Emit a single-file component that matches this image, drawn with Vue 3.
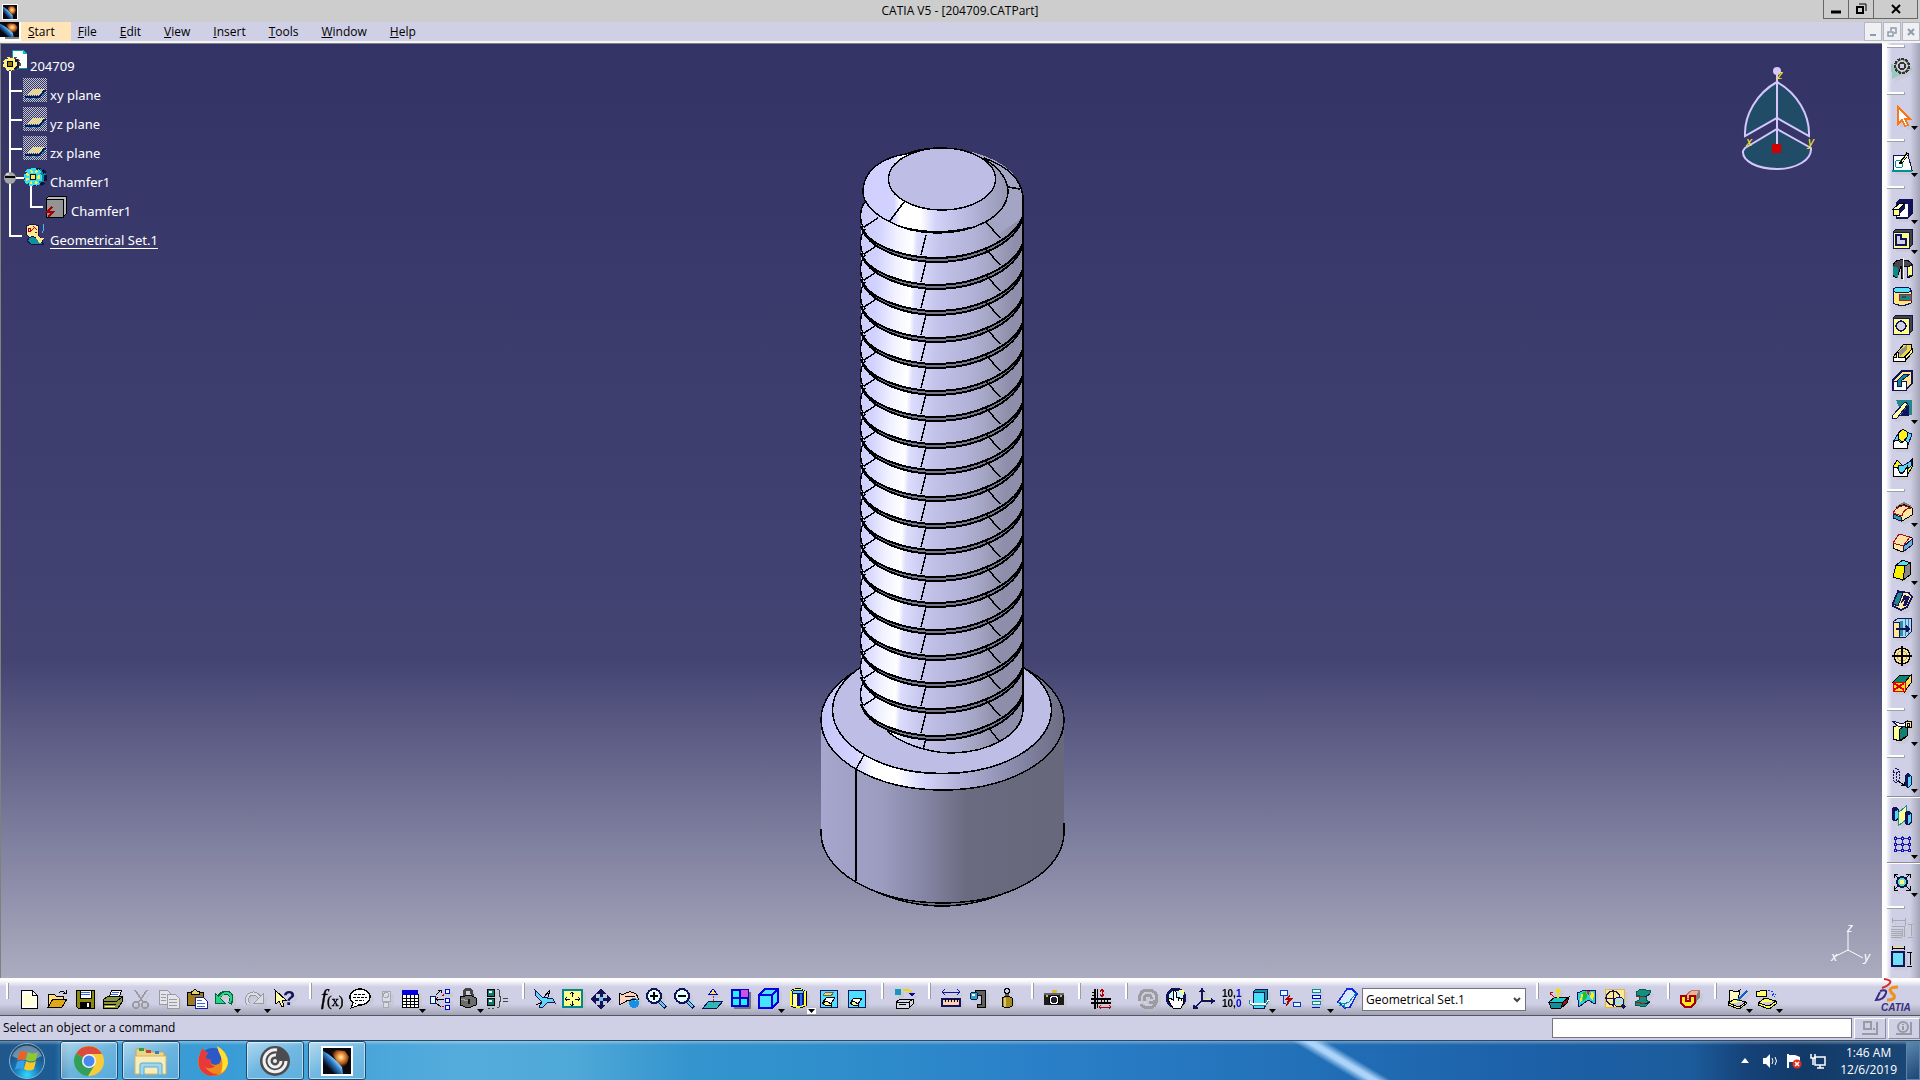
<script setup>
import { ref } from 'vue'

const menus = ['Start', 'File', 'Edit', 'View', 'Insert', 'Tools', 'Window', 'Help']

const bodies = ['Geometrical Set.1', 'Chamfer1']
const currentBody = ref(bodies[0])
const powerInput = ref('')

const tree = [
  { icon: 'partDoc', text: '204709', level: 0 },
  { icon: 'plane', text: 'xy plane', level: 1 },
  { icon: 'plane', text: 'yz plane', level: 1 },
  { icon: 'plane', text: 'zx plane', level: 1 },
  { icon: 'bodyGear', text: 'Chamfer1', level: 1 },
  { icon: 'solid', text: 'Chamfer1', level: 2 },
  { icon: 'geoSet', text: 'Geometrical Set.1', level: 1, active: true },
]

const t = (id, label, kind = '') => ({ id, label, kind })

const bottomGroups = [
  [
    t('newDoc', 'New'), t('open', 'Open'), t('save', 'Save'), t('print', 'Print'), t('cut', 'Cut'),
    t('copy', 'Copy'), t('paste', 'Paste'), t('undo', 'Undo', 'drop'), t('redo', 'Redo', 'drop'), t('whats', "What's This?"),
  ],
  [
    t('fx', 'Formula'), t('comment', 'Comment'), t('lamp', 'Check', 'narrow'), t('table', 'Design Table', 'drop'),
    t('links', 'Relations'), t('lock', 'Lock', 'drop'), t('equiv', 'Equivalent Dimensions'),
  ],
  [
    t('fly', 'Fly Mode'), t('fit', 'Fit All In'), t('pan', 'Pan'), t('rotate', 'Rotate'), t('zoomIn', 'Zoom In'),
    t('zoomOut', 'Zoom Out'), t('normal', 'Normal View'), t('multi', 'Multi-View'), t('cube', 'Isometric View', 'drop'),
    t('shade', 'View Mode', 'drop lit'), t('hide', 'Hide/Show'), t('swap', 'Swap Visible Space'),
  ],
  [t('printer3d', 'Catalog')],
  [t('ruler', 'Measure Between'), t('clamp', 'Measure Item'), t('weight', 'Measure Inertia')],
  [t('camera', 'Capture')],
  [t('caliper', 'Mean Dimensions')],
  [
    t('update', 'Update All'), t('manual', 'Manual Update'), t('axis', 'Axis System'), t('tol', 'Mean Dimensions'),
    t('insertBody', 'Create Datum', 'drop'), t('bolt', 'Only Current Body'), t('levels', 'Historical Graph', 'drop'), t('sheet', 'Current Body'),
  ],
]

const bottomTail = [
  [t('draftA', 'Draft Analysis'), t('curv', 'Curvature Analysis'), t('tap', 'Tap Thread Analysis'), t('wall', 'Wall Analysis')],
  [t('section', 'Dynamic Sectioning')],
  [t('catalog', 'Open Catalog', 'drop'), t('folder', 'Instantiate From Document', 'drop')],
]

const rightGroups = [
  { tools: [t('gear', 'Workbench', 'tall')] },
  { tools: [t('arrow', 'Select', 'drop')] },
  { tools: [t('sketch', 'Sketcher', 'drop')] },
  {
    tools: [
      t('pad', 'Pad', 'drop'), t('pocket', 'Pocket', 'drop'), t('shaft', 'Shaft'), t('groove', 'Groove'), t('hole', 'Hole'),
      t('rib', 'Rib'), t('slot', 'Slot'), t('stiff', 'Stiffener', 'drop'), t('loft', 'Multi-sections Solid'), t('rloft', 'Removed Multi-sections Solid'),
    ],
  },
  {
    tools: [
      t('fillet', 'Edge Fillet', 'drop'), t('chamfer', 'Chamfer'), t('draft', 'Draft Angle', 'drop'), t('shell', 'Shell'),
      t('thick', 'Thickness'), t('thread', 'Thread/Tap'), t('remove', 'Remove Face', 'drop'),
    ],
  },
  { tools: [t('split', 'Split', 'drop')] },
  { tools: [t('translate', 'Translation', 'drop')] },
  { full: true, tools: [t('mirror', 'Mirror'), t('pattern', 'Rectangular Pattern', 'drop')] },
  { full: true, tools: [t('scale', 'Scaling', 'drop')] },
  { tools: [t('constraintDlg', 'Constraints Defined in Dialog'), t('constraint', 'Constraint')] },
]

const g = 'fill="none" stroke="#9a9aa0" stroke-width="1.5"'
const k = 'stroke="#000"'
const n = 'stroke="#12125a"'

const icons = {
  newDoc: `<path d="M4 3H15L20 8V21H4Z" fill="#fff" ${k}/><path d="M6 7H14V10H18V19H6Z" fill="#ffffd8"/><path d="M15 3V8H20" fill="none" ${k}/>`,
  open: `<path d="M3 20V7H9L11 9H18V12" fill="#ffe070" ${k}/><path d="M3 20L8 12H22L17 20Z" fill="#e0a818" ${k}/><path d="M14 6Q17 2 20 6M18 6H21V3" fill="none" ${k}/>`,
  save: `<path d="M3 3H21V21H5L3 19Z" fill="#8a8a10" ${k}/><path d="M7 3H18V11H7Z" fill="#fff" ${k}/><path d="M8 5H17M8 7H17" stroke="#3a6ae0"/><path d="M7 15H18V21H7Z" fill="#000"/><path d="M14 16H16V20H14Z" fill="#fff"/>`,
  print: `<path d="M8 10L11 3H21L18 10Z" fill="#fff" ${k}/><path d="M11 5H18M10 7H17" stroke="#3a6ae0"/><path d="M2 13L7 9H21V15L17 21H2Z" fill="#8a9440" ${k}/><path d="M2 14H16L21 10M3 17H15" fill="none" ${k}/><path d="M4 19H14" stroke="#ffff80"/>`,
  cut: `<g ${g}><path d="M6 3L14 15M18 3L10 15"/><circle cx="7" cy="18" r="3"/><circle cx="16" cy="18" r="3"/></g>`,
  copy: `<path d="M2 3H10L14 7V17H2Z" fill="#e4e4ec" stroke="#9a9aa0"/><path d="M10 7H18L22 11V21H10Z" fill="#e4e4ec" stroke="#9a9aa0"/><path d="M4 7H9M4 10H9M4 13H9M12 12H20M12 15H20M12 18H20" stroke="#9a9aa0"/>`,
  paste: `<path d="M2 5H18V18H2Z" fill="#9c7c18" ${k}/><path d="M6 7V4H8L10 2L12 4H14V7Z" fill="#e8d070" ${k}/><path d="M10 10H18L22 14V21H10Z" fill="#fff" stroke="#1a1aa0"/><path d="M12 13H17M12 16H20M12 19H20" stroke="#3a6ae0"/>`,
  undo: `<path d="M5 11Q9 4 15 6Q21 8 17 17" fill="none" stroke="#063" stroke-width="4"/><path d="M2 6V16H12Z" fill="#2bd08a" stroke="#063"/><path d="M6 11Q10 5 15 6Q20 8 17 16" fill="none" stroke="#2bd08a" stroke-width="2"/>`,
  redo: `<path d="M17 11Q13 5 8 7Q2 10 5 17" fill="none" stroke="#9a9aa0" stroke-width="4"/><path d="M17 11Q13 5 8 7Q2 10 5 17" fill="none" stroke="#dcdce8" stroke-width="2"/><path d="M20 7V16H11Z" fill="#dcdce8" stroke="#9a9aa0"/>`,
  whats: `<path d="M2 3L3 17L6 14L9 20L11 19L9 13H13Z" fill="#ffffa0" ${k}/><text x="10" y="18" font-family="Liberation Sans" font-weight="700" font-size="20" fill="#12125a">?</text>`,
  fx: `<text x="1" y="17" font-family="Liberation Serif" font-style="italic" font-size="21" fill="#000" stroke="#000" stroke-width=".4">f</text><text x="7" y="19" font-family="Liberation Serif" font-size="14" fill="#000" stroke="#000" stroke-width=".4">(x)</text>`,
  comment: `<ellipse cx="12" cy="10" rx="10" ry="8" fill="#fff" ${k} stroke-width="1.5"/><path d="M5 16L3 21L12 18" fill="#fff" ${k}/><path d="M6 7H18M5 10H19M7 13H16" ${k} stroke-dasharray="3 1"/>`,
  lamp: `<path d="M8 4H16V14H8Z" fill="#dcdce8" stroke="#a8a8b0"/><circle cx="12" cy="8" r="2.500" fill="#dcdce8" stroke="#a8a8b0"/><circle cx="12" cy="18" r="3" fill="#dcdce8" stroke="#a8a8b0"/>`,
  table: `<path d="M4 3H20V20H4Z" fill="#fff"/><path d="M4 7V20H20V7M8 8V20M12 8V20M16 8V20M4 11H20M4 14H20M4 17H20" fill="none" ${k}/><path d="M4 3H20V8H4Z" fill="#0000e0"/>`,
  links: `<path d="M2 9H7V16H2Z" fill="#dff" ${n}/><path d="M17 2H21V6H17ZM17 11H21V15H17ZM17 18H21V22H17Z" fill="#dff" stroke="#00c"/><path d="M7 12H16M8 8L13 3M8 16L13 20M10 3H13V6M10 10L8 12L10 14" fill="none" ${k}/><path d="M14 8H16M15 7V9M14 19H16" stroke="#b00"/>`,
  lock: `<path d="M8 11V6Q8 2 12 2Q16 2 16 7V11" fill="none" stroke="#444" stroke-width="3"/><path d="M4 10L14 8L20 11V18L12 21L4 18Z" fill="#6c6c6c" ${k}/><path d="M5 12L12 14" stroke="#a0a0a0"/><path d="M13 12V17" stroke="#111" stroke-width="2"/>`,
  equiv: `<path d="M1 2H8V9H1ZM1 11H8V18H1Z" fill="#0a7a6a" ${k}/><path d="M3 4H6V6H3ZM3 13H6V15H3Z" fill="#fff"/><path d="M11 2Q14 2 13 7L15 12L13 17Q14 21 11 21M17 11H22M17 14H22M2 21H4M6 21H8" fill="none" stroke="#444"/>`,
  fly: `<path d="M2 3L9 10L20 12L22 16L15 15L9 21L6 20L9 15L3 9Z" fill="#60d8f8" ${n}/><path d="M11 10L17 3L15 10M3 18L9 15" fill="none" ${k}/>`,
  fit: `<path d="M2 3H21V20H2Z" fill="#ffff90" stroke="#00888c" stroke-width="1.500"/><path d="M2 3H21" stroke="#00888c" stroke-width="2"/><path d="M11 5V10M11 14V19M4 12H9M14 12H19M9 7L11 5L13 7M9 17L11 19L13 17M6 10L4 12L6 14M17 10L19 12L17 14" fill="none" ${k}/>`,
  pan: `<path d="M12 2L16 6H13V11H18V8L22 12L18 16V13H13V18H16L12 22L8 18H11V13H6V16L2 12L6 8V11H11V6H8Z" fill="#12125a" stroke="#12125a"/><path d="M10 10H14V14H10Z" fill="#60c8f0"/>`,
  rotate: `<path d="M2 6L6 8Q12 2 19 7Q23 12 20 15L17 12L10 14L6 16L2 18Z" fill="#ffd4bc" ${k}/><circle cx="17" cy="16" r="5" fill="#1a90e0"/><path d="M14 13Q17 11 19 14" stroke="#c0f0ff" fill="none"/><path d="M8 10L18 9M9 14L19 12" ${k}/>`,
  zoomIn: `<path d="M14 14L21 21" ${n} stroke-width="4"/><path d="M14 14L20 20" stroke="#60d0f0" stroke-width="2"/><circle cx="9" cy="9" r="7" fill="#e4ffff" ${n} stroke-width="2"/><path d="M5 9H13M9 5V13" ${k} stroke-width="2"/>`,
  zoomOut: `<path d="M14 14L21 21" ${n} stroke-width="4"/><path d="M14 14L20 20" stroke="#60d0f0" stroke-width="2"/><circle cx="9" cy="9" r="7" fill="#e4ffff" ${n} stroke-width="2"/><path d="M5 9H13" ${k} stroke-width="2"/>`,
  normal: `<path d="M2 21L8 14H22L16 21Z" fill="#30b8b8" ${n}/><path d="M12 6V16" stroke="#b04000" stroke-dasharray="2 1"/><path d="M8 7L12 2L16 7Z" fill="#ffe060" stroke="#00c"/>`,
  multi: `<path d="M5 5H22V22H5Z" fill="#70707c"/><path d="M3 3H19V19H3Z" fill="#20f0ff" stroke="#0000d0" stroke-width="1.500"/><path d="M12 3H19V11H12Z" fill="#d050e0"/><path d="M11 3V19M3 11H19" stroke="#0000d0" stroke-width="1.500"/>`,
  cube: `<path d="M2 8L8 2H21V15L15 21H2Z" fill="#48e4ff" stroke="#0000e0" stroke-width="1.500"/><path d="M2 8H15V21M15 8L21 2" fill="none" stroke="#0000e0" stroke-width="1.500"/>`,
  shade: `<path d="M4 5V18Q11 22 18 18V5Q11 0 4 5Z" fill="#101090" ${k} stroke-width="3"/><path d="M4 5V18Q11 22 18 18V5Q11 0 4 5Z" fill="#101090" stroke="#ffff30" stroke-width="1.500"/><path d="M6 7H10V19H6Z" fill="#ffff90"/><path d="M13 7H15V19H13Z" fill="#2070f0"/><ellipse cx="11" cy="5" rx="6" ry="2" fill="#50d8f8" stroke="#12125a"/>`,
  hide: `<path d="M3 3H20V20H3Z" fill="#50e0ff" ${n}/><path d="M6 8L9 5H17L14 9Z" fill="#e8e060" stroke="#666"/><path d="M5 16L10 10H18L14 17Z" fill="#fff" ${k}/><path d="M5 16L10 14L14 17V19L8 18Z" fill="#ffff90" ${k}/>`,
  swap: `<path d="M3 3H20V20H3Z" fill="#50e0ff" ${n}/><path d="M5 16L9 11H17L13 17Z" fill="#fff" ${k}/><path d="M5 16L9 14L13 17V19L8 18Z" fill="#ffff90" ${k}/>`,
  printer3d: `<circle cx="6" cy="5" r="3.500" fill="#1898b8"/><path d="M11 3Q18 2 20 6" fill="none" stroke="#e8d800" stroke-width="2"/><path d="M17 6H23L20 10Z" fill="#00c"/><path d="M4 15L9 12H21V17L17 21H4Z" fill="#d8d8e4" ${k}/><path d="M4 15H17L21 12M17 15V21M7 17H14" fill="none" ${k}/>`,
  ruler: `<path d="M3 5H21M6 2L3 5L6 8M18 2L21 5L18 8" fill="none" stroke="#1010a0"/><path d="M3 12H21V19H3Z" fill="#ffd0b4" ${n} stroke-width="1.500"/><path d="M6 12V15M9 12V15M12 12V15M15 12V15M18 12V15" ${k}/>`,
  clamp: `<path d="M8 3H18V20H10V17H14V8H8Z" fill="#606060" ${k}/><circle cx="7" cy="9" r="4" fill="#20a8c0" ${n}/><path d="M5 8H8" stroke="#fff" stroke-width="2"/>`,
  weight: `<circle cx="12" cy="4" r="2.500" fill="none" ${k} stroke-width="1.500"/><path d="M10 7H14V10H10Z" fill="#555"/><path d="M7 11Q12 8 17 11V19Q12 22 7 19Z" fill="#a88c20" ${k}/><path d="M10 11V20" stroke="#e0c860" stroke-width="2"/>`,
  camera: `<path d="M2 6H22V18H2Z" fill="#1c1c1c"/><path d="M2 7H22" stroke="#606080" stroke-width="2"/><path d="M10 3H15V6H10Z" fill="#d8c020"/><circle cx="12" cy="13" r="5" fill="#fff" ${k}/><circle cx="12" cy="13" r="3" fill="#223"/><path d="M4 8H6V10H4ZM18 8H20V10H18Z" fill="#d8c020"/>`,
  caliper: `<path d="M6 2V22M2 16H22M2 12H22" ${k} stroke-width="1.500"/><path d="M8 2V21M3 5H6M3 8H6M12 12V15M15 12V15M18 12V15" ${k}/><path d="M13 3V9M11 5L13 2L15 5M11 7L13 10L15 7M11 20H21M12 18L10 20L12 22M20 18L22 20L20 22" fill="none" stroke="#b00000"/>`,
  update: `<g fill="none" stroke="#9c9ca0" stroke-width="3"><path d="M3 14Q3 3 12 3Q21 4 21 11Q19 17 13 15"/><path d="M21 12Q20 21 12 21Q6 20 5 17"/><path d="M9 14Q7 9 12 8Q16 9 15 12"/></g>`,
  manual: `<circle cx="12" cy="11" r="9" fill="#c8f4ff" ${n} stroke-width="3"/><path d="M14 3H20V9Z" fill="#ffff80"/><path d="M9 21L4 13L6 11L9 13V4Q11 3 12 5V10L19 12Q20 17 17 21Z" fill="#fff" ${k}/><path d="M14 11V14M17 12V14" ${k}/>`,
  axis: `<path d="M10 3V14H21M10 14L2 21M8 5L10 2L12 5M19 12L22 14L19 16M2 18V21H6" fill="none" ${n} stroke-width="1.500"/><path d="M12 12H18" stroke="#f0f060"/>`,
  tol: `<text x="2" y="10" font-family="Liberation Sans" font-weight="700" font-size="10" fill="#000">10,<tspan fill="#0000e0">1</tspan></text><text x="2" y="20" font-family="Liberation Sans" font-weight="700" font-size="10" fill="#000">10,<tspan fill="#0000e0">0</tspan></text>`,
  insertBody: `<path d="M5 5L8 2H19V17L16 21H5Z" fill="#0c9aa0" ${n}/><path d="M5 5H16V21H5Z" fill="#48e0f8" ${n}/><path d="M2 14Q1 17 4 17H18L21 13" fill="none" stroke="#fff" stroke-width="2"/><path d="M2 13Q1 18 4 18H18L21 14" fill="none" stroke="#108890"/>`,
  bolt: `<path d="M2 3H9V8H2ZM15 15H22V19H15Z" fill="#dff" stroke="#1030d0"/><path d="M5 8V16H8" fill="none" stroke="#1030d0"/><path d="M13 6L7 13H10L7 21L15 11H11Z" fill="#b00000"/>`,
  levels: `<path d="M6 2H14V5H6ZM6 14H14V17H6Z" fill="#dff" stroke="#009090"/><path d="M6 8H14V11H6ZM6 20H14" fill="#dff" stroke="#0000e0"/>`,
  sheet: `<path d="M2 15L11 2H16L21 7L14 20L9 21Z" fill="#d8e8ff" stroke="#1028e0" stroke-width="1.500"/><path d="M2 15L8 17L13 15L21 5M8 17L9 21M3 18L8 19" fill="none" stroke="#0090a0"/>`,
  draftA: `<path d="M2 15L8 10H22L16 15Z" fill="#20c8c8" ${k}/><path d="M2 15H16L14 21H4Z" fill="#109098" ${k}/><path d="M16 15L22 10L20 16L14 21Z" fill="#a01010" ${k}/><path d="M11 11V3M9 5L11 2L13 5" fill="none" stroke="#f0e000" stroke-width="1.500"/><path d="M8 11L3 6M3 8V5H6" fill="none" stroke="#b00"/>`,
  curv: `<path d="M2 6L10 3L21 4L20 17L13 13L4 20Z" fill="#28d0e0" ${n}/><path d="M7 6L11 4L12 10L8 14Z" fill="#20c020"/><path d="M12 4H15L13 9Z" fill="#e82010"/><path d="M16 5L19 6L18 14L15 11ZM6 7H8L7 13L5 15Z" fill="#ffe820"/>`,
  tap: `<path d="M2 2H21V20H2Z" fill="#ffe890" stroke="#d8b848"/><circle cx="10" cy="11" r="7" fill="none" ${n} stroke-width="1.500"/><path d="M10 3V20M2 11H19" ${n}/><circle cx="16" cy="15" r="5" fill="#a8e0f8" ${n}/><path d="M13 14H19M13 17H19" stroke="#e8d860"/><path d="M19 18L22 21" ${n} stroke-width="3"/>`,
  wall: `<path d="M5 5L10 2L20 4L18 8L15 9V13L19 15L14 20L4 18V15L8 13V8L5 8Z" fill="#109080" stroke="#0c5850"/><path d="M5 9L14 10M5 15L14 17" stroke="#a01818"/><path d="M14 10L19 7M14 17L19 15" stroke="#12125a"/>`,
  section: `<path d="M6 10L14 3H22L17 11L13 13Z" fill="#f0b098" stroke="#b87860"/><path d="M22 3V10L16 18V13Z" fill="#808080"/><path d="M3 9H8V14H12V9H17V16L13 20H7L3 16Z" fill="#ffe820" stroke="#a00000" stroke-width="1.500"/>`,
  catalog: `<path d="M5 3Q12 6 15 3L13 14H4Z" fill="#ffffc0" ${k}/><path d="M3 16L10 12L21 15L14 20ZM3 16V18L14 22L21 17V15" fill="#ffff70" ${k}/><path d="M22 4L12 14" stroke="#1060d0" stroke-width="2"/>`,
  folder: `<path d="M1 4H5L6 3H11V9H1Z" fill="#ffff70" ${k}/><path d="M13 4Q19 3 19 9M17 7L19 10L21 7" fill="none" stroke="#1040e0" stroke-dasharray="2 1"/><path d="M3 16L10 11L21 14L14 19ZM3 16V18L14 22L21 17V14" fill="#ffff50" ${k}/>`,
  gear: `<path d="M1 8L24 13L2 23Z" fill="#98c8c0"/><circle cx="12" cy="10" r="7" fill="#8c8c8c" stroke="#333" stroke-width="2" stroke-dasharray="3 1"/><circle cx="12" cy="10" r="5" fill="none" stroke="#d0d0d0" stroke-width="1.500"/><circle cx="12" cy="10" r="3" fill="#cfcfe5" stroke="#333" stroke-width="1.500"/>`,
  arrow: `<path d="M8 4V21L12 17L15 23L18 22L15 16H20Z" fill="#fff" stroke="#f87818" stroke-width="1.500"/>`,
  sketch: `<path d="M3 5H18L22 20H3Z" fill="#fff" ${n}/><path d="M2 21H22" stroke="#009098" stroke-width="1.500"/><circle cx="9" cy="14" r="4" fill="none" stroke="#009098"/><path d="M18 3L10 14" ${k} stroke-width="3"/><path d="M18 4L12 12" stroke="#f8f880"/>`,
  pad: `<path d="M6 6L10 2H22V17L18 21H6Z" fill="#12125a" ${n}/><path d="M6 6H18V20H6Z" fill="#fff" ${n}/><path d="M3 12L10 6H15L9 12Z" fill="#ffffd0" ${k}/><path d="M3 12H9V18H3Z" fill="#ffff88" ${k}/><path d="M9 12L15 6V11L9 18Z" fill="#12125a"/>`,
  pocket: `<path d="M3 5L6 2H22V18L19 21H3Z" fill="#444" ${n}/><path d="M3 5H19V21H3Z" fill="#ffff88" ${n}/><path d="M6 8H11V12H16V18H6Z" fill="#cfcfe5" ${n} stroke-width="1.500"/>`,
  shaft: `<path d="M3 8Q6 2 13 3Q21 3 22 8V19L17 21V10L13 9V21H11V9L7 21L3 19Z" fill="#484850" ${k}/><path d="M3 9L8 11V21L3 18Z" fill="#108888"/><path d="M17 10L22 8V18L17 20Z" fill="#ffff88" ${n}/><path d="M13 1V23" stroke="#fff"/>`,
  groove: `<path d="M3 5V18Q12 23 21 18V14H12V10H21V5Z" fill="#ffe87c" ${n}/><ellipse cx="12" cy="5" rx="9" ry="3" fill="#58e0f8" ${n}/><path d="M9 9H21V15H9Z" fill="#108888" stroke="#b02020"/><path d="M12 11H16V13H12Z" fill="#444"/>`,
  hole: `<path d="M3 5L6 2H22V18L19 21H3Z" fill="#444" ${n}/><path d="M3 5H19V21H3Z" fill="#ffff88" ${n}/><circle cx="11" cy="13" r="5" fill="#cfcfe5" ${n} stroke-width="1.500"/>`,
  rib: `<path d="M3 16L14 3H21V9L11 20Z" fill="#f0d840" ${k}/><path d="M9 10L17 4V8L10 15Z" fill="#909090"/><path d="M3 20H15V16H8V11H6V16H3Z" fill="#fff" ${k}/><path d="M15 20V16L22 8V12Z" fill="#ffff88" ${k}/>`,
  slot: `<path d="M3 11L12 2H22V14L16 21H3Z" fill="#ffe88c" ${n} stroke-width="1.500"/><path d="M3 12H7V17H11V12H16V21H3Z" fill="#fff" ${n}/><path d="M7 12L14 5H20L11 12V17H7Z" fill="#108898" ${n}/>`,
  stiff: `<path d="M6 3H22V18H12Z" fill="#20888c"/><path d="M10 19L19 7V19Z" fill="#12125a"/><path d="M2 19L15 5L18 7L7 21H2Z" fill="#ffffa0" ${n}/>`,
  loft: `<path d="M3 15L8 7Q12 0 16 5L22 7L17 21H3Z" fill="#58d8f0" ${n}/><path d="M8 8Q12 -1 17 5L18 9L13 15L8 12Z" fill="#fff020" ${k}/><path d="M3 21V15L7 13L12 16L15 13L17 15V21Z" fill="#fff" ${k}/>`,
  rloft: `<path d="M3 21V12L7 5L12 10H16L22 4V12L17 21Z" fill="#fff020" ${k}/><path d="M8 10H14L21 6V11L14 17H9Z" fill="#58d8f0" ${n}/><path d="M3 21V12H7L10 18H13L17 12V21Z" fill="#fff" ${k}/>`,
  fillet: `<path d="M5 7L14 2L22 6L15 9Z" fill="#808080"/><path d="M3 13Q8 4 15 5L22 8V15L12 21L3 18Z" fill="#ffe8a0" ${k}/><path d="M3 13Q8 5 15 6L21 8Q13 9 12 16Z" fill="#ffe0a8" stroke="#a01010"/><path d="M3 14L11 17V21L3 18Z" fill="#30a0a0" ${n}/>`,
  chamfer: `<path d="M3 13L9 4L22 8V15L12 22L3 18Z" fill="#ffe8a0" ${k}/><path d="M3 13L9 4L20 7L13 16Z" fill="#ffe0a8" stroke="#a01010"/><path d="M13 17L22 9V15L13 22Z" fill="#60b0d8" ${n}/>`,
  draft: `<path d="M6 7L13 2L20 5L15 8Z" fill="#58e0f0" ${k}/><path d="M6 7L15 8L13 22L3 19Z" fill="#f8f000" ${k}/><path d="M15 8L20 5V17L13 22Z" fill="#888" ${k}/>`,
  shell: `<path d="M3 15L8 3L19 5L22 9L17 19L11 22L3 18Z" fill="#ffe8a0" ${n} stroke-width="1.500"/><path d="M3 16L8 4L13 5L8 18Z" fill="#20888c" ${n}/><path d="M10 17L14 7L20 9L16 18H13L15 11Z" fill="#12125a"/>`,
  thick: `<path d="M3 6L8 2H21V16L16 21H3Z" fill="#b0d8f0" ${n}/><path d="M3 6H9V21H3Z" fill="#ffe890" ${n}/><path d="M10 5H13V20H10ZM15 3H16V20H15ZM18 3H19V18H18Z" fill="#2890a8"/><path d="M6 13H19M16 10L19 13L16 16" fill="none" ${n} stroke-width="1.500"/>`,
  thread: `<circle cx="12" cy="12" r="8" fill="#ffe890" ${k} stroke-width="1.500"/><circle cx="12" cy="12" r="5" fill="none" stroke="#b8a060"/><path d="M12 2V22M2 12H22" ${k} stroke-width="1.500"/>`,
  remove: `<path d="M3 10L10 3H21L15 10Z" fill="#108070" ${k}/><path d="M15 10L21 3V11L15 19Z" fill="#ffe050" ${k}/><path d="M3 10H15V19H3Z" fill="#ffe020" stroke="#e00000"/><path d="M4 11L14 18M14 11L4 18" stroke="#e00000" stroke-width="2"/>`,
  split: `<path d="M3 8L9 6L16 8V18L10 22L3 20Z" fill="#ffff98" ${k}/><path d="M9 11L17 5V17L10 21Z" fill="#108070" ${k}/><path d="M2 2L13 5L17 2V8L8 7Z" fill="#fff" ${n}/><path d="M15 2H21V8H15Z" fill="#ffe880" ${k}/><path d="M17 4H19V7H17Z" fill="#fff" ${k}/>`,
  translate: `<path d="M3 5L6 2L9 4V14L6 17L3 14ZM3 6L6 7L9 5M6 7V16" fill="none" ${n} stroke-dasharray="2 1"/><path d="M8 15L14 19M11 19H14V16" fill="none" ${k}/><path d="M15 10L18 7L21 10V19L18 22L15 19Z" fill="#12125a" ${n}/><path d="M18 11L21 10V19L18 21Z" fill="#50d8f0"/>`,
  mirror: `<path d="M2 5L5 3L8 5V15L5 17L2 15Z" fill="#12125a" ${n}/><path d="M5 7L8 6V14L5 16Z" fill="#50d8f0"/><path d="M8 9L16 2V16L8 22Z" fill="#ffff98" stroke="#109098"/><path d="M15 9L18 7L21 9V19L18 21L15 19Z" fill="#12125a" ${n}/><path d="M18 11L21 10V18L18 20Z" fill="#50d8f0"/>`,
  pattern: `<path d="M5 4V20M12 4V20M19 4V20M4 6H20M4 12H20M4 18H20" stroke="#2020c0"/><g fill="#cfe0ff" stroke="#1010b0"><path d="M4 5H6V7H4ZM11 5H13V7H11ZM18 5H20V7H18ZM4 11H6V13H4ZM11 11H13V13H11ZM18 11H20V13H18ZM4 17H6V19H4ZM11 17H13V19H11ZM18 17H20V19H18Z"/></g>`,
  scale: `<path d="M4 4L20 20M20 4L4 20M4 8V4H8M16 4H20V8M4 16V20H8M16 20H20V16" fill="none" ${k}/><circle cx="12" cy="12" r="5" fill="#60e0c0" ${n} stroke-width="2"/><path d="M10 10H14V14H10Z" fill="#f8f880"/>`,
  constraintDlg: `<path d="M2 3H15M2 1V6M15 1V9M18 7H23M18 20H23M21 8V19M2 9H14V20M1 12H12V20M1 14H12M1 16H12M1 18H12M1 20H12" fill="none" stroke="#a8a8b0"/>`,
  constraint: `<path d="M2 7H14V21H2Z" fill="#70e0f8" ${n} stroke-width="1.500"/><path d="M2 1V5M14 1V5M2 3H14M17 7H22M17 21H22M20 8V20" fill="none" ${k}/><path d="M3 2H13" stroke="#f0e860"/>`,
  partDoc: `<path d="M9 1H20L24 5V19H9Z" fill="#fff" stroke="#009aa6"/><path d="M20 1V5H24" fill="#00c0d0"/><circle cx="11" cy="15" r="6" fill="#1a1a40" stroke="#55554a" stroke-width="2" stroke-dasharray="2 2"/><circle cx="7" cy="15" r="6" fill="#ffef80" stroke="#ffef80" stroke-width="2" stroke-dasharray="3 2"/><circle cx="7" cy="15" r="3" fill="#8a7a10" ${k}/>`,
  bodyGear: `<circle cx="15" cy="12" r="8" fill="#088a98" stroke="#101040" stroke-width="3" stroke-dasharray="4 2"/><circle cx="10" cy="12" r="8" fill="#38dcf0" stroke="#38dcf0" stroke-width="3" stroke-dasharray="4 2"/><circle cx="10" cy="12" r="6" fill="none" stroke="#f8f040" stroke-width="3" stroke-dasharray="2 3"/><circle cx="10" cy="12" r="3" fill="#f8f040" stroke="#101040"/>`,
  solid: `<path d="M2 5L5 2H22V20L19 23H2Z" fill="#b8b8b8" ${k}/><path d="M2 5H19V23H2Z" fill="#949494" ${k}/><path d="M8 13L3 18H9L4 23" fill="none" stroke="#a80000" stroke-width="2"/>`,
  geoSet: `<path d="M3 3Q9 0 16 3L15 12Q20 17 20 20H8Q9 16 4 12Z" fill="#ffe890" ${n}/><path d="M5 5H7V8H5ZM10 3L14 7M7 9L11 5M12 9H14" fill="none" stroke="#a80000"/><path d="M4 18Q8 11 13 15L20 21H8Z" fill="#109098" ${n}/><path d="M13 15L21 15L17 21Z" fill="#ffe890"/><path d="M20 1Q22 6 19 10" fill="none" stroke="#40c0e8"/>`,
}

// checker of light pixels that carries the plane symbols
const planeDots = []
for (let y = 0; y < 24; y++) planeDots.push(`M${y % 2} ${y + 0.5}H24`)
icons.plane =
  '<path d="M3 17L9 11H22L17 17Z" fill="#ffe96c"/>' +
  `<path d="${planeDots.join('')}" stroke="#c4c4cc" stroke-dasharray="1 1"/>` +
  '<path d="M2 19H16L22 12" fill="none" stroke="#12125a" stroke-width="2"/><path d="M2 20H17L23 13" fill="none" stroke="#0aa0b0" stroke-dasharray="2 1"/>'

const threads = Array.from({ length: 19 }, (_, i) => Math.round(i * 26.55))
</script>

<template>
  <div class="app">
    <svg class="defs" width="0" height="0" aria-hidden="true">
      <defs>
        <radialGradient id="flare" cx=".55" cy=".4" r=".5">
          <stop offset="0" stop-color="#fff0c8" /><stop offset=".35" stop-color="#f4a040" /><stop offset=".8" stop-color="#94441c" /><stop offset="1" stop-color="#2a1410" />
        </radialGradient>
        <linearGradient id="beam" x1="0" x2="1" y1="1" y2="0">
          <stop offset=".3" stop-color="#0a1c3c" /><stop offset=".48" stop-color="#2c78c0" /><stop offset=".6" stop-color="#7cc4f4" />
        </linearGradient>
        <symbol id="nova" viewBox="0 0 28 26" preserveAspectRatio="none">
          <rect width="28" height="26" fill="#08080e" />
          <path d="M8 4L13 2L22 3L26 9L24 16L20 20L14 14Z" fill="url(#flare)" />
          <path d="M0 3Q10 8 19 19L20 26H12L0 14Z" fill="url(#beam)" />
        </symbol>
      </defs>
    </svg>

    <header class="titlebar">
      <svg class="brand" width="16" height="16" viewBox="0 0 16 16" aria-hidden="true">
        <rect width="16" height="16" fill="#fff" /><use href="#nova" x="1" y="1" width="14" height="14" />
      </svg>
      <h1>CATIA V5 - [204709.CATPart]</h1>
      <div class="winbtns">
        <button type="button" aria-label="Minimize"><svg width="12" height="12" viewBox="0 0 12 12"><path d="M1 9H11" stroke="#000" stroke-width="3" /></svg></button>
        <button type="button" aria-label="Restore"><svg width="12" height="12" viewBox="0 0 12 12"><path d="M2 4H8V10H2Z" fill="none" stroke="#000" stroke-width="2" /><path d="M4 1H11V8" fill="none" stroke="#000" /></svg></button>
        <button type="button" aria-label="Close" class="wide"><svg width="12" height="12" viewBox="0 0 12 12"><path d="M2 2L10 10M10 2L2 10" stroke="#000" stroke-width="2" /></svg></button>
      </div>
    </header>

    <nav class="menubar">
      <svg width="21" height="19" viewBox="0 0 21 19" aria-hidden="true">
        <rect width="21" height="19" fill="#fff" /><use href="#nova" width="19" height="15" /><path d="M5 16H19" stroke="#000" />
      </svg>
      <button v-for="(m, i) in menus" :key="m" type="button" :class="{ hot: i === 0 }"><u>{{ m[0] }}</u>{{ m.slice(1) }}</button>
      <div class="mdi">
        <button type="button" aria-label="Minimize document"><svg width="10" height="10" viewBox="0 0 10 10"><path d="M2 8H8" stroke="#8c9cb0" stroke-width="2" /></svg></button>
        <button type="button" aria-label="Restore document"><svg width="10" height="10" viewBox="0 0 10 10"><path d="M1 5H6V9H1ZM4 4V1H9V6H7" fill="none" stroke="#8c9cb0" stroke-width="1.500" /></svg></button>
        <button type="button" aria-label="Close document"><svg width="10" height="10" viewBox="0 0 10 10"><path d="M2 2L8 8M8 2L2 8" stroke="#8c9cb0" stroke-width="2" /></svg></button>
      </div>
    </nav>

    <main class="work">
      <section class="viewport">
        <svg class="model" width="260" height="775" viewBox="812 140 260 775" role="img" aria-label="Socket head screw">
          <defs>
            <linearGradient id="thread" gradientUnits="userSpaceOnUse" x1="861" x2="1024" y1="0" y2="6">
              <stop offset="0" stop-color="#c8c8f8" /><stop offset=".16" stop-color="#d2d2ff" /><stop offset=".28" stop-color="#f2f2ff" /><stop offset=".37" stop-color="#fff" />
              <stop offset=".4" stop-color="#dcdcfc" /><stop offset=".55" stop-color="#c2c2ea" /><stop offset=".75" stop-color="#b2b2d8" /><stop offset=".88" stop-color="#a2a2c0" /><stop offset="1" stop-color="#8e8eaa" />
            </linearGradient>
            <linearGradient id="tip" gradientUnits="userSpaceOnUse" x1="862" x2="1008" y1="0" y2="0">
              <stop offset="0" stop-color="#cfcfff" /><stop offset=".22" stop-color="#d2d2ff" /><stop offset=".26" stop-color="#fff" /><stop offset=".4" stop-color="#fff" />
              <stop offset=".5" stop-color="#d4d4fa" /><stop offset=".75" stop-color="#b4b4dc" /><stop offset="1" stop-color="#9696b2" />
            </linearGradient>
            <linearGradient id="ring" gradientUnits="userSpaceOnUse" x1="820" x2="1064" y1="0" y2="0">
              <stop offset="0" stop-color="#c4c4f8" /><stop offset=".15" stop-color="#d4d4ff" /><stop offset=".22" stop-color="#fff" /><stop offset=".32" stop-color="#fff" />
              <stop offset=".42" stop-color="#d4d4fc" /><stop offset=".6" stop-color="#acacd2" /><stop offset=".85" stop-color="#8080a0" /><stop offset="1" stop-color="#6c6c82" />
            </linearGradient>
            <linearGradient id="head" gradientUnits="userSpaceOnUse" x1="820" x2="1064" y1="0" y2="0">
              <stop offset="0" stop-color="#a6a6ce" /><stop offset=".25" stop-color="#9c9cc0" /><stop offset=".45" stop-color="#8282a0" /><stop offset=".6" stop-color="#6a6a80" /><stop offset="1" stop-color="#68687c" />
            </linearGradient>
          </defs>

          <g fill="none" stroke="#000" stroke-width="1.500">
            <path d="M872 890Q942 922 1012 890Z" fill="#70708a" />
            <path d="M821 720V833A121.500 70 0 0 0 1064 833V720Z" fill="url(#head)" stroke="none" />
            <path d="M821 829V833A121.500 70 0 0 0 1064 833V823" />
            <path d="M856 769V881" stroke-width="2" />
            <ellipse cx="942.500" cy="720" rx="121.500" ry="70" fill="url(#ring)" />
            <ellipse cx="942" cy="710" rx="109.500" ry="63.500" fill="#bdbde6" />
            <path d="M864 755L856 769" />

            <path d="M865 202Q861 208 861 216V700Q870 722 885 727C892 740 925 753 952 753C990 752 1022 735 1023 710V195Z" fill="url(#thread)" stroke="none" />
            <path d="M885 727C892 740 925 753 952 753C990 752 1022 735 1023 710V690" />
            <path d="M926 739L923 749M988 727L999 741" />

            <path d="M972 152Q1023 166 1023 200V217L990 240L985 190Z" fill="#a4a4c4" stroke="none" />
            <path d="M984 158Q1023 172 1023 200V217M1008 187L1020 189" />

            <g v-for="dy in threads" :key="dy" :transform="`translate(0 ${dy})`">
              <path d="M865 202C860 208 859 220 863 227M1023 216V222" />
              <path d="M878 218L864 227M926 235L921 255M986 222L1000 238" />
              <path d="M861 226C867 249 905 262 937 262C976 262 1018 243 1023 216C1015 240 975 258 937 258C905 258 868 246 861 226Z" fill="#77778c" stroke-width="2" />
            </g>
            <path d="M1023 195V700" />

            <path d="M863 192C863 168 886 157 906 154Q942 140 984 159C1004 170 1008 184 1008 192C1006 218 972 233 937 233C900 233 863 212 863 192Z" fill="url(#tip)" />
            <path d="M905 228Q937 236 970 228" stroke-width="2" />
            <ellipse cx="942" cy="179" rx="53.500" ry="31" fill="#bdbde6" />
            <path d="M904 202L889 222" />
          </g>
        </svg>

        <svg class="compass" width="80" height="110" viewBox="1737 63 80 110" role="img" aria-label="Compass">
          <g fill="#204c68" stroke="#d6c6fc" stroke-width="2">
            <path d="M1777 82C1757 93 1744 115 1745 136L1777 118L1809 136C1810 115 1797 93 1777 82Z" />
            <path d="M1745 148L1777 129L1811 148C1812 160 1796 169 1777 169C1757 169 1742 161 1743 151Z" />
            <path d="M1777 74V144" />
            <circle cx="1777" cy="71" r="4" fill="#d6c6fc" stroke="none" />
          </g>
          <path d="M1772 144H1781V153H1772Z" fill="#d00000" />
          <g fill="#f4ec20" font-family="Noto Sans, sans-serif" font-size="13" font-style="italic">
            <text x="1777" y="79">z</text><text x="1746" y="146">x</text><text x="1808" y="146">y</text>
          </g>
        </svg>

        <svg class="axes" width="50" height="52" viewBox="1826 918 50 52" role="img" aria-label="Axis system">
          <path d="M1848 932V950L1836 956M1848 950L1863 958" fill="none" stroke="#fff" />
          <g fill="#fff" font-family="Noto Sans, sans-serif" font-size="13" font-style="italic">
            <text x="1847" y="932">z</text><text x="1831" y="961">x</text><text x="1864" y="961">y</text>
          </g>
        </svg>

        <div class="tree">
          <svg class="branches" width="50" height="210" viewBox="0 44 50 210" aria-hidden="true">
            <path d="M10 72V237H22M10 92H22M10 121H22M10 150H22M10 179H24M31 187V208H43" fill="none" stroke="#fff" stroke-width="2" />
            <circle cx="10" cy="179" r="6" fill="#a4a4a4" /><path d="M5 178H15" stroke="#000" stroke-width="2" /><path d="M6 175H9" stroke="#fff" />
          </svg>
          <ul>
            <li v-for="(node, i) in tree" :key="i" :class="['lvl' + node.level, { active: node.active }]">
              <svg width="24" height="24" viewBox="0 0 24 24" aria-hidden="true" v-html="icons[node.icon]"></svg>
              <span>{{ node.text }}</span>
            </li>
          </ul>
        </div>
      </section>

      <aside class="sidebar">
        <div v-for="(grp, i) in rightGroups" :key="i" class="vgroup">
          <i :class="['grip', { full: grp.full, first: i === 0 }]"></i>
          <button v-for="tool in grp.tools" :key="tool.id" type="button" :class="['tool', tool.kind]" :aria-label="tool.label">
            <svg width="24" height="24" viewBox="0 0 24 24" v-html="icons[tool.id]"></svg>
            <b v-if="tool.kind.includes('drop')" class="caret"></b>
          </button>
        </div>
      </aside>
    </main>

    <div class="toolbar">
      <div v-for="(grp, i) in bottomGroups" :key="i" class="group">
        <i :class="['sep', { first: i === 0 }]"></i>
        <button v-for="tool in grp" :key="tool.id" type="button" :class="['tool', tool.kind]" :aria-label="tool.label">
          <svg width="24" height="24" viewBox="0 0 24 24" v-html="icons[tool.id]"></svg>
          <b v-if="tool.kind.includes('drop')" class="caret"></b>
        </button>
      </div>
      <div class="combo">
        <select v-model="currentBody" aria-label="Current body">
          <option v-for="b in bodies" :key="b">{{ b }}</option>
        </select>
        <svg width="8" height="8" viewBox="0 0 8 8" aria-hidden="true"><path d="M1 2L4 5L7 2" fill="none" stroke="#444" stroke-width="2" /></svg>
      </div>
      <div v-for="(grp, i) in bottomTail" :key="'t' + i" class="group">
        <i class="sep"></i>
        <button v-for="tool in grp" :key="tool.id" type="button" :class="['tool', tool.kind]" :aria-label="tool.label">
          <svg width="24" height="24" viewBox="0 0 24 24" v-html="icons[tool.id]"></svg>
          <b v-if="tool.kind.includes('drop')" class="caret"></b>
        </button>
      </div>
      <svg class="logo" width="44" height="36" viewBox="0 0 44 36" role="img" aria-label="CATIA">
        <path d="M12 1Q20 2 18 5Q16 8 10 10" fill="none" stroke="#d82c2c" stroke-width="2" />
        <path d="M8 13Q15 11 14 15Q12 22 4 22L8 14" fill="none" stroke="#3c2c80" stroke-width="2" />
        <path d="M26 9Q19 9 18 12Q19 15 22 17Q24 22 15 22" fill="none" stroke="#f0901c" stroke-width="3" />
        <text x="9" y="33" font-family="Liberation Sans, sans-serif" font-weight="700" font-style="italic" font-size="10" fill="#3c2c80">CATIA</text>
      </svg>
    </div>

    <div class="status">
      <span>Select an object or a command</span>
      <input v-model="powerInput" type="text" aria-label="Power input" />
      <button type="button" aria-label="Command history"><svg width="18" height="16" viewBox="0 0 18 16"><path d="M3 2H10V9H3ZM12 9H14M1 14H16V2" fill="none" stroke="#9a9aa4" stroke-width="2" /></svg></button>
      <button type="button" aria-label="Information"><svg width="18" height="16" viewBox="0 0 18 16"><circle cx="8" cy="7" r="5" fill="none" stroke="#9a9aa4" stroke-width="2" /><path d="M8 4V5M7 7H8V10M1 14H16V2" fill="none" stroke="#9a9aa4" stroke-width="2" /></svg></button>
    </div>

    <footer class="taskbar">
      <button type="button" class="orb" aria-label="Start menu">
        <svg width="38" height="38" viewBox="0 0 38 38">
          <defs><radialGradient id="orb" cx=".5" cy=".9" r=".9"><stop offset="0" stop-color="#30d8ff" /><stop offset=".4" stop-color="#1878b8" /><stop offset="1" stop-color="#1c3c60" /></radialGradient></defs>
          <circle cx="19" cy="19" r="17.500" fill="url(#orb)" stroke="#8cb4d0" />
          <path d="M4 14A16 16 0 0 1 34 14Q19 22 4 14Z" fill="#fff" opacity=".35" />
          <path d="M11 11Q15 8 19 10L17 18Q13 16 9 19Z" fill="#f06020" /><path d="M20 10Q25 13 30 10L28 18Q23 21 18 18Z" fill="#90c830" />
          <path d="M9 20Q13 17 17 19L15 27Q11 25 7 28Z" fill="#38a0e8" /><path d="M18 19Q23 22 28 19L26 27Q21 30 16 27Z" fill="#f8c828" />
        </svg>
      </button>
      <button type="button" class="task framed" aria-label="Chrome">
        <svg width="30" height="30" viewBox="0 0 30 30"><circle cx="15" cy="15" r="15" fill="#f8cc38" /><path d="M15 15L2 7.500A15 15 0 0 1 28 8H15Z" fill="#dc4c3c" /><path d="M15 15L2 7.500A15 15 0 0 0 14 30L20 20Z" fill="#30a05c" /><circle cx="15" cy="15" r="7" fill="#f4f4f4" /><circle cx="15" cy="15" r="5.500" fill="#4888f0" /></svg>
      </button>
      <button type="button" class="task framed" aria-label="Explorer">
        <svg width="34" height="30" viewBox="0 0 34 30"><path d="M2 3H12V6H30V28H2Z" fill="#ecd488" stroke="#c8a850" /><path d="M5 2H10V5H5Z" fill="#30a040" /><path d="M12 4H17V7H12Z" fill="#d04030" /><path d="M21 5H25V8H21Z" fill="#3080d0" /><path d="M1 10H32V28H1Z" fill="#f8ecb8" stroke="#d4b868" /><path d="M6 29V19Q6 17 8 17H26Q28 17 28 19V29H24V21H10V29Z" fill="#9cd8f0" stroke="#60a8d0" /></svg>
      </button>
      <button type="button" class="task" aria-label="Firefox">
        <svg width="32" height="32" viewBox="0 0 32 32"><circle cx="16" cy="17" r="14" fill="#2c58c8" /><path d="M3 9Q4 5 6 3Q7 7 11 8Q7 12 10 14L14 15Q12 19 18 20Q25 19 24 12Q25 8 20 1Q31 7 31 18Q29 31 16 31Q2 30 1 17Q1 12 3 9Z" fill="#f08820" /><path d="M20 1Q31 7 31 18Q29 26 24 28Q27 18 24 12Q21 6 20 1Z" fill="#ffe030" /><path d="M3 9Q4 5 6 3Q7 7 11 8Q7 12 10 14L14 15Q12 20 18 21Q14 25 8 22Q14 30 22 29Q10 34 3 24Q0 16 3 9Z" fill="#e83838" /></svg>
      </button>
      <button type="button" class="task framed" aria-label="Connect">
        <svg width="30" height="30" viewBox="0 0 30 30"><circle cx="15" cy="15" r="15" fill="#4c4c50" /><g fill="none" stroke="#f0f0f0" stroke-width="3"><path d="M17 4A11 11 0 1 0 26 15" /><path d="M16 9A6 6 0 1 0 21 15" /></g><circle cx="15" cy="15" r="2" fill="#f0f0f0" /></svg>
      </button>
      <button type="button" class="task framed" aria-label="CATIA">
        <svg width="32" height="30" viewBox="0 0 32 30"><rect width="32" height="30" fill="#fff" /><use href="#nova" x="2" y="2" width="28" height="26" /></svg>
      </button>
      <div class="tray">
        <button type="button" aria-label="Show hidden icons"><svg width="8" height="5" viewBox="0 0 8 5"><path d="M0 5L4 0L8 5Z" fill="#fff" /></svg></button>
        <button type="button" aria-label="Volume"><svg width="16" height="14" viewBox="0 0 16 14"><path d="M1 4H4L8 0V14L4 10H1Z" fill="#fff" /><path d="M10 4Q12 7 10 10M13 3Q16 7 13 11" fill="none" stroke="#fff" /></svg></button>
        <button type="button" aria-label="Action Center"><svg width="16" height="16" viewBox="0 0 16 16"><path d="M2 1V15" stroke="#fff" stroke-width="2" /><path d="M3 2H9L14 4V9H3Z" fill="#fff" /><circle cx="11" cy="11" r="4.500" fill="#e03020" /><path d="M9 9L13 13M13 9L9 13" stroke="#fff" stroke-width="1.500" /></svg></button>
        <button type="button" aria-label="Network"><svg width="16" height="16" viewBox="0 0 16 16"><path d="M5 4H15V12H5Z" fill="none" stroke="#fff" stroke-width="1.500" /><path d="M7 15H14M10 12V15M1 1V5H5V1M3 5V12" fill="none" stroke="#fff" stroke-width="1.500" /></svg></button>
        <div class="clock"><time>1:46 AM</time><time>12/6/2019</time></div>
        <button type="button" class="desk" aria-label="Show desktop"></button>
      </div>
    </footer>
  </div>
</template>

<style>
body {
  margin: 0;
}
</style>

<style scoped>
.app {
  display: flex;
  flex-direction: column;
  min-height: 100vh;
  background: #cfcfe5;
  color: #000;
  font: 12px/16px "Open Sans", "Noto Sans", sans-serif;
}
.defs {
  position: absolute;
}
button {
  margin: 0;
  padding: 0;
  border: 0;
  background: none;
  color: inherit;
  font: inherit;
}
svg {
  display: block;
  flex: none;
}

.titlebar {
  display: grid;
  grid-template-columns: 1fr auto 1fr;
  height: 22px;
  background: #cdcdcd;
}
.brand {
  margin: 4px 0 0 2px;
}
h1 {
  margin: 0;
  font-size: 12px;
  font-weight: 400;
  line-height: 22px;
}
.winbtns {
  display: flex;
  justify-content: flex-end;
  padding-right: 2px;
}
.winbtns button {
  display: flex;
  align-items: center;
  justify-content: center;
  width: 25px;
  height: 19px;
  border: solid #666;
  border-width: 0 0 1px 1px;
}
.winbtns .wide {
  width: 45px;
  border-right-width: 1px;
}

.menubar {
  display: flex;
  height: 19px;
  border-bottom: 2px solid #f4f4f8;
}
.menubar > button {
  padding: 0 16px 0 7px;
}
.menubar .hot {
  background: #ffe4b8;
}
.mdi {
  display: flex;
  gap: 1px;
  margin-left: auto;
}
.mdi button {
  display: flex;
  align-items: center;
  justify-content: center;
  width: 18px;
  border: 1px solid #b4b8c4;
  background: #f0f0f2;
  box-sizing: border-box;
}

.work {
  display: flex;
  flex: 1;
}
.viewport {
  position: relative;
  flex: 1;
  border: solid #80807c;
  border-width: 1px 0 0 1px;
  background: linear-gradient(#333366, #444473 66%, #acacc0);
}
.model {
  margin: 96px auto 63px;
  shape-rendering: crispEdges;
}
.compass {
  position: absolute;
  top: 19px;
  right: 65px;
}
.axes {
  position: absolute;
  right: 6px;
  bottom: 8px;
}

.tree {
  position: absolute;
  top: -1px;
  left: -1px;
  color: #fff;
  font-family: "Noto Sans", sans-serif;
  font-size: 13px;
}
.branches {
  position: absolute;
  top: 0;
  left: 0;
}
.tree ul {
  position: relative;
  margin: 0;
  padding: 8px 0 0;
  list-style: none;
}
.tree li {
  display: flex;
  align-items: center;
  gap: 3px;
  height: 29px;
}
.tree li svg {
  margin-bottom: 10px;
  shape-rendering: crispEdges;
}
.lvl0 {
  padding-left: 3px;
}
.lvl1 {
  padding-left: 23px;
}
.lvl2 {
  padding-left: 44px;
}
.active span {
  text-decoration: underline;
  text-underline-offset: 3px;
}

.sidebar {
  width: 38px;
  background: linear-gradient(90deg, #fff 4px, #e4e4f2 7px, #cfcfe5 10px, #cfcfe5 28px, #a4a4b8);
}
.grip {
  display: flow-root;
  height: 17px;
  margin-left: 5px;
}
.grip::after {
  content: "";
  display: block;
  width: 17px;
  height: 2px;
  margin-top: 8px;
  background: #fff;
  border: solid #a0a0ac;
  border-width: 0 1px 1px 0;
}
.grip.first {
  height: 11px;
}
.grip.first::after {
  margin-top: 2px;
}
.grip.full {
  height: 8px;
}
.grip.full::after {
  width: auto;
  height: 1px;
  margin-top: 2px;
  border: solid #8c8c98;
  border-width: 1px 0 0;
}

.tool {
  position: relative;
  display: flex;
  align-items: flex-start;
}
.tool svg {
  overflow: visible;
  shape-rendering: crispEdges;
  filter: drop-shadow(3px 3px 0 rgba(190, 190, 192, 0.35));
}
.caret {
  position: absolute;
  width: 7px;
  height: 4px;
  background: #000;
  clip-path: polygon(0 0, 100% 0, 50% 100%);
}
.sidebar .tool {
  width: 38px;
  height: 28px;
  padding: 2px 0 0 8px;
}
.sidebar .drop,
.sidebar .tall {
  height: 30px;
}
.sidebar .caret {
  left: 29px;
  top: 25px;
}

.toolbar {
  display: flex;
  height: 37px;
  border-bottom: 1px solid #55555c;
  background: linear-gradient(#fff 2px, #cfcfe5 9px, #cfcfe5 26px, #a2a2b6);
}
.group {
  display: flex;
}
.sep {
  width: 2px;
  height: 16px;
  margin: 5px 6px 0 10px;
  background: #fff;
  border-right: 1px solid #9c9ca8;
}
.sep.first {
  margin-left: 6px;
}
.toolbar .tool {
  width: 28px;
  padding: 9px 2px 0;
}
.toolbar .drop {
  width: 30px;
}
.toolbar .narrow {
  width: 22px;
  padding: 9px 0 0;
}
.toolbar .caret {
  left: 23px;
  top: 31px;
}
.toolbar .lit::before {
  content: "";
  position: absolute;
  left: 22px;
  top: 30px;
  width: 9px;
  height: 6px;
  background: #fff;
}
.combo {
  position: relative;
  width: 164px;
  margin-top: 10px;
}
.combo select {
  width: 100%;
  height: 23px;
  padding: 0 20px 0 3px;
  border: 1px solid #74747c;
  border-radius: 0;
  appearance: none;
  background: #fff;
  color: #000;
  font: inherit;
}
.combo svg {
  position: absolute;
  top: 8px;
  right: 5px;
}
.logo {
  margin: 0 4px 0 auto;
}

.status {
  display: flex;
  align-items: center;
  gap: 2px;
  height: 24px;
  border-bottom: 1px solid #2c4a66;
}
.status span {
  flex: 1;
  padding-left: 3px;
}
.status input {
  width: 300px;
  height: 20px;
  box-sizing: border-box;
  border: 1px solid #74747c;
  background: #fff;
  font: inherit;
}
.status button {
  display: flex;
  align-items: center;
  justify-content: center;
  width: 32px;
  height: 21px;
  border: 1px solid;
  border-color: #fff #8c8c98 #8c8c98 #fff;
  box-sizing: border-box;
}

.taskbar {
  position: relative;
  display: flex;
  height: 39px;
  color: #fff;
  background:
    linear-gradient(rgba(255, 255, 255, 0.35), rgba(255, 255, 255, 0) 4px),
    linear-gradient(90deg, #20588c, #1c5c94 55px, #3c9cd2 70px, #3a9cd6 12%, #54acdc 24%, #4ea8d8 30%, #3494ce 36%, #3090cc 42%, #2a80c8 54%, #2270b8 68%, #1c60a8 80%, #1c5c9c 88%, #154278 91%, #123a68 94%, #1a4878);
}
.taskbar::before {
  content: "";
  position: absolute;
  left: 67%;
  top: 0;
  bottom: 0;
  width: 110px;
  background: linear-gradient(31deg, transparent 40%, #acd4fa 48%, #acd4fa 52%, transparent 60%);
}
.orb {
  width: 60px;
  padding: 1px 0 0 8px;
}
.task {
  display: flex;
  align-items: center;
  justify-content: center;
  width: 58px;
  margin-right: 4px;
  box-sizing: border-box;
}
.framed {
  border: 1px solid #1c4c70;
  border-radius: 3px;
  background: linear-gradient(150deg, rgba(255, 255, 255, 0.6), rgba(255, 255, 255, 0.25) 50%, rgba(255, 255, 255, 0.15));
  box-shadow: inset 0 0 0 1px rgba(255, 255, 255, 0.5);
}
.tray {
  display: flex;
  align-items: center;
  gap: 8px;
  margin-left: auto;
}
.tray > button:first-child {
  margin-right: 5px;
}
.clock {
  display: flex;
  flex-direction: column;
  align-items: center;
  margin: 0 1px 0 6px;
  line-height: 17px;
}
.tray .desk {
  align-self: stretch;
  width: 14px;
  border: 1px solid #5c84a8;
  background: linear-gradient(150deg, #5c88b0, #1c4674);
  box-sizing: border-box;
}
</style>
